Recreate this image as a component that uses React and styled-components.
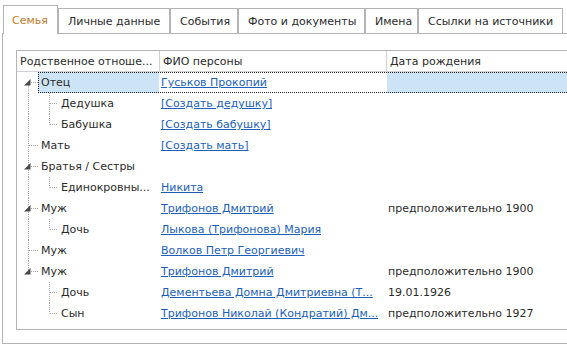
import React from 'react';
import styled, { createGlobalStyle } from 'styled-components';

const GlobalStyle = createGlobalStyle`
  body {
    margin: 0;
    background: #fff;
    overflow: hidden;
    font-family: "DejaVu Sans", Verdana, sans-serif;
    font-size: 11px;
    color: #2b2b2b;
  }
`;

const Page = styled.div`
  width: 660px;
  padding: 5px 0 0 2px;
`;

const TabStrip = styled.div`
  display: flex;
  align-items: flex-end;
  padding-left: 1px;
  height: 28px;
`;

const Tab = styled.div`
  position: relative;
  display: flex;
  align-items: center;
  box-sizing: border-box;
  width: ${(p) => p.w}px;
  height: ${(p) => (p.active ? '29px' : '25px')};
  margin-bottom: ${(p) => (p.active ? '-1px' : '0')};
  padding-left: ${(p) => (p.active ? 8 : 9)}px;
  border: 1px solid #b4b4b4;
  border-bottom: none;
  background: #fff;
  color: ${(p) => (p.active ? '#c27a2c' : '#2b2b2b')};
  white-space: nowrap;
  z-index: ${(p) => (p.active ? 1 : 0)};
`;

const Panel = styled.div`
  box-sizing: border-box;
  height: 311px;
  padding: 16px 13px 13px 13px;
  border: 1px solid #b4b4b4;
`;

const Grid = styled.div`
  height: 100%;
  box-sizing: border-box;
  border: 1px solid #b4b4b4;
`;

const Row = styled.div`
  display: grid;
  grid-template-columns: 143px 227px 1fr;
  height: ${(p) => (p.header ? '20px' : '21px')};
  border-bottom: ${(p) => (p.header ? '1px solid #d2d2d2' : 'none')};
  position: relative;
`;

const HeadCell = styled.div`
  display: flex;
  align-items: center;
  padding: 0 3px;
  border-right: 1px solid #d2d2d2;
  white-space: nowrap;
  overflow: hidden;
`;

const Cell = styled.div`
  display: flex;
  align-items: center;
  min-width: 0;
  padding: 0 ${(p) => (p.flush ? 0 : 1)}px;
  border-right: 1px solid transparent;
  background: ${(p) => (p.sel ? '#cde4f7' : 'transparent')};
  white-space: nowrap;
  overflow: hidden;
`;

const Label = styled.div`
  flex: 1;
  align-self: stretch;
  display: flex;
  align-items: center;
  padding-left: 3px;
  min-width: 0;
  background: ${(p) => (p.sel ? '#cde4f7' : 'transparent')};
  overflow: hidden;
`;

const Link = styled.a`
  color: #1c5fb9;
  text-decoration: underline;
  cursor: pointer;
  overflow: hidden;
  text-overflow: ellipsis;
`;

const Focus = styled.div`
  position: absolute;
  left: 21px;
  right: 0;
  top: 0;
  bottom: 0;
  border: 1px dotted #222;
  pointer-events: none;
`;

const rows = [
  { lvl: 0, name: 'Отец', exp: true, link: 'Гуськов Прокопий', sel: true },
  { lvl: 1, name: 'Дедушка', link: '[Создать дедушку]' },
  { lvl: 1, name: 'Бабушка', link: '[Создать бабушку]' },
  { lvl: 0, name: 'Мать', link: '[Создать мать]' },
  { lvl: 0, name: 'Братья / Сестры', exp: true },
  { lvl: 1, name: 'Единокровны...', link: 'Никита' },
  { lvl: 0, name: 'Муж', exp: true, link: 'Трифонов Дмитрий', date: 'предположительно 1900' },
  { lvl: 1, name: 'Дочь', link: 'Лыкова (Трифонова) Мария' },
  { lvl: 0, name: 'Муж', link: 'Волков Петр Георгиевич' },
  { lvl: 0, name: 'Муж', exp: true, link: 'Трифонов Дмитрий', date: 'предположительно 1900' },
  { lvl: 1, name: 'Дочь', link: 'Дементьева Домна Дмитриевна (Т...', date: '19.01.1926' },
  { lvl: 1, name: 'Сын', link: 'Трифонов Николай (Кондратий) Дм...', date: 'предположительно 1927' },
];

const LINE = '#a6a6a6';

// tree connector lines for one row
const TreeLines = ({ rows, i }) => {
  const r = rows[i];
  const rootBefore = rows.slice(0, i).some((x) => x.lvl === 0);
  const rootAfter = rows.slice(i + 1).some((x) => x.lvl === 0);
  const w = r.lvl === 0 ? 21 : 41;
  const c = 10.5;
  const dots = { stroke: LINE, strokeWidth: 1, strokeDasharray: '1 1' };
  return (
    <svg width={w} height="21" style={{ flex: 'none' }}>
      {r.lvl === 0 && (
        <>
          <line x1="11.5" y1={rootBefore ? 0 : c} x2="11.5" y2={rootAfter ? 21 : c} {...dots} />
          <line x1="12" y1={c} x2="21" y2={c} {...dots} />
          {r.exp && <polygon points="13.5,7 13.5,13.5 7,13.5" fill="#4a4a4a" />}
        </>
      )}
      {r.lvl === 1 && (
        <>
          {rootAfter && <line x1="11.5" y1="0" x2="11.5" y2="21" {...dots} />}
          <line
            x1="32.5"
            y1="0"
            x2="32.5"
            y2={rows[i + 1] && rows[i + 1].lvl === 1 ? 21 : c}
            {...dots}
          />
          <line x1="33" y1={c} x2="41" y2={c} {...dots} />
        </>
      )}
    </svg>
  );
};

const tabs = [
  { t: 'Семья', w: 55 },
  { t: 'Личные данные', w: 112 },
  { t: 'События', w: 68 },
  { t: 'Фото и документы', w: 127 },
  { t: 'Имена', w: 53 },
  { t: 'Ссылки на источники', w: 145 },
];

export default function App() {
  return (
    <Page>
      <GlobalStyle />
      <TabStrip>
        {tabs.map((tab, i) => (
          <Tab key={tab.t} active={i === 0} w={tab.w}>
            {tab.t}
          </Tab>
        ))}
      </TabStrip>
      <Panel>
        <Grid>
          <Row header>
            <HeadCell>Родственное отноше...</HeadCell>
            <HeadCell>ФИО персоны</HeadCell>
            <HeadCell>Дата рождения</HeadCell>
          </Row>
          {rows.map((r, i) => (
            <Row key={i}>
              <Cell flush>
                <TreeLines rows={rows} i={i} />
                <Label sel={r.sel}>{r.name}</Label>
              </Cell>
              <Cell>{r.link && <Link>{r.link}</Link>}</Cell>
              <Cell sel={r.sel}>{r.date}</Cell>
              {r.sel && <Focus />}
            </Row>
          ))}
        </Grid>
      </Panel>
    </Page>
  );
}
